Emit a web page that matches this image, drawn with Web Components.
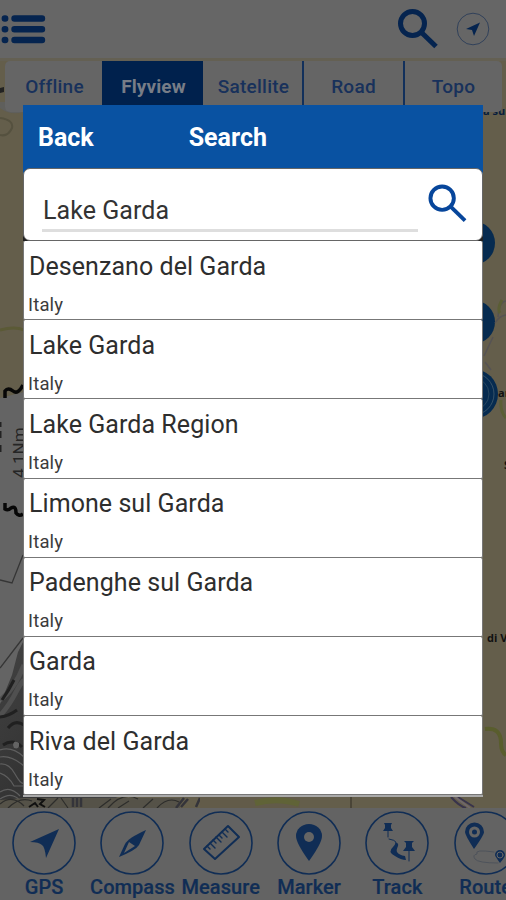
<!DOCTYPE html>
<html lang="en">
<head>
<meta charset="utf-8">
<title>Map search</title>
<style>
html,body{margin:0;width:506px;height:900px;overflow:hidden;background:#666}
</style>
</head>
<body>
<map-app></map-app>
<script>
const define = (name, html) => customElements.define(name, class extends HTMLElement {
  constructor(){
    super();
    const t = document.createElement('template');
    t.innerHTML = typeof html === 'function' ? html(this) : html;
    this.attachShadow({mode:'open'}).append(t.content.cloneNode(true));
  }
});

define('map-canvas', `
<style>:host{display:block;width:506px;height:900px}svg{display:block}text{font-family:"Open Sans",sans-serif;font-weight:700;fill:#111}</style>
<svg width="506" height="900" viewBox="0 0 506 900" fill="none">
  <defs><linearGradient id="hill" x1="0" y1="0" x2="1" y2="1"><stop stop-color="#424242"/><stop offset=".5" stop-color="#343434"/><stop offset="1" stop-color="#484848"/></linearGradient></defs>
  <rect width="506" height="900" fill="#645e4b"/>
  <path d="M0 330Q15 326 24 330" stroke="#5b5a36" stroke-width="3"/>
  <path d="M0 398L24 392V810H0Z" fill="#646464"/>
  <path d="M0 118Q14 120 12 128Q8 137 0 135" stroke="#55513f" stroke-width="2"/>
  <path d="M0 108Q10 116 24 112V102H0Z" fill="#5f5f5c"/>
  <path d="M0 88L4 87V92L0 93Z" fill="#222"/>
  <path d="M5 398V391Q8 387 13 391Q18 395 23 385" stroke="#070707" stroke-width="3.5"/>
  <path d="M5 503V509Q8 511 11 508Q16 505 16 513Q19 517 23 514" stroke="#070707" stroke-width="3.5"/>
  <path d="M0 422V427M0 431V438M0 445V452" stroke="#222" stroke-width="3"/>
  <path d="M0 580L12 583L23 555M0 668L23 638" stroke="#353535" stroke-width="1.3"/>
  <path d="M24 640L18 652L12 675L5 692L0 704V808H140L100 790H24Z" fill="url(#hill)"/>
  <path d="M0 700Q14 690 24 665M0 716Q10 704 15 694T24 680" stroke="#505050" stroke-width="5"/>
  <path d="M14 680Q9 690 2 700M17 710Q9 716 0 717M24 725Q15 719 8 728M3 745Q13 738 22 747" stroke="#202020" stroke-width="3"/>
  <path d="M13 745Q14 739 19 743Q20 750 14 748Z" fill="#646464"/>
  <path d="M0 750Q12 746 24 757M0 757Q11 755 24 766M0 764Q9 763 15 774T24 783M0 773Q9 776 14 786H24M0 792Q10 785 20 796M0 799Q13 790 22 803" stroke="#5e5e5e" stroke-width="1.2"/>
  <path d="M24 798H180V808H0V800Z" fill="#555248"/>
  <path d="M0 804Q12 794 24 806M8 808Q20 796 32 801M48 808L58 798M61 798L68 808M99 808L111 799M108 808Q123 791 138 799M118 808L129 801M143 808L153 799M157 808Q168 796 179 802" stroke="#2d2d2b" stroke-width="1.2"/>
  <path d="M29 807L35 803L38 807M37 799L44 800L40 804L45 807" stroke="#101010" stroke-width="2"/>
  <path d="M73 807V798M77 807V798M81 807V798M176 808L184 798M181 807L188 799M196 807L200 798" stroke="#34343a" stroke-width="2.5"/>
  <path d="M200 797H300V808H200Z" fill="#625b49"/><path d="M255 803Q278 797 299 804" stroke="#606337" stroke-width="6"/>
  <path d="M351 797V808" stroke="#302d24"/><path d="M451 797Q459 806 466 808M458 797L474 807" stroke="#38334b" stroke-width="2"/><path d="M455 797L470 808" stroke="#70676a" stroke-width="2"/>
  <circle cx="473" cy="243" r="22" fill="#062b50"/><circle cx="473" cy="322" r="22" fill="#062b50"/>
  <path d="M506 301Q499 302 498 317M506 315Q499 316 495 323M484 356L493 337M485 362L491 370" stroke="#565354" stroke-width="1.5"/>
  <circle cx="473" cy="394" r="25" fill="#062b50"/><circle cx="473" cy="394" r="21" stroke="#365268"/><circle cx="473" cy="394" r="16" stroke="#274761"/>
  <path d="M485 729Q501 727 501 743Q501 752 506 755" stroke="#595d2d" stroke-width="4"/>
  <path d="M502 300Q497 309 500 313M501 400Q500 412 506 418" stroke="#5b5e35" stroke-width="3"/>
  <text x="498" y="397" font-size="11">ar</text><text x="504" y="469" font-size="11">S</text><text x="487" y="642" font-size="11">di V</text>
  <text x="483" y="115" font-size="11" style="fill:#071d3d">a sul</text>
  <text transform="translate(25 481) rotate(-90)" font-size="17" style="font-weight:400;fill:#252525;font-family:Roboto,sans-serif" x="3">4.1Nm</text>
</svg>`);

define('circle-icon', h => `
<style>:host{display:block;flex:none}svg{display:block;overflow:visible}</style>
<svg width="64" height="64" viewBox="-32 -32 64 64" fill="none" stroke="#102d55" stroke-linecap="round" stroke-linejoin="round">
<circle r="31" stroke-width="1.6"/>${({
gps:'<path d="M15-14L2 15Q1 4-2 2Q-5-1-14-1Z" fill="#102d55" stroke="none"/>',
compass:'<path d="M14-13L7 2Q4 7-13 14L-7 1Q-4-5 14-13Z" fill="#102d55" stroke="none"/><path d="M-3-1L3 3L-8 10Z" fill="#656565" stroke="none"/>',
measure:'<path d="M7-17L18-6L-6 16L-17 6Z" stroke-width="2"/><path d="M-14 3L-11 6M-11 0L-6 5M-8-3L-5 0M-5-6L0-1M-2-8L1-5M1-11L6-6M4-14L7-11" stroke-width="1.4"/>',
marker:'<path d="M0 18Q-13 0-13-7A13 12 0 1 1 13-7Q13 0 0 18Z" fill="#102d55" stroke="none"/><circle cy="-6" r="5" fill="#656565" stroke="none"/>',
track:'<path d="M-13-20H-5L-6-18V-15L-4-12H-14L-12-15V-18ZM7-2H17L15 0V4L18 8H6L9 4V0Z" fill="#102d55" stroke="none"/><path d="M-9-12V-6M12 8V18" stroke-width="1"/><path d="M-8-4Q-2-3-1-1" stroke-width="1"/><path d="M-2-1Q-1 1-4 4Q-10 9-2 13Q4 17 9 17L8 13Q2 12 0 9Q-1 7 1 3Q2 0-2-1Z" fill="#102d55" stroke="none"/>',
route:'<path d="M-12 6Q-21-8-21-11A9.500 9.500 0 0 1-2-11Q-2-8-12 6Z" fill="#102d55" stroke="none"/><circle cx="-11.500" cy="-11" r="5.500" fill="#656565" stroke="none"/><circle cx="-11.500" cy="-11" r="2.500" fill="#102d55" stroke="none"/><path d="M14 20Q9 13 9 12A5 5 0 0 1 19 12Q19 14 14 20Z" fill="#102d55" stroke="none"/><circle cx="14" cy="12" r="3" stroke="#656565" stroke-width="1"/><path d="M8 9Q-12 6-9 11Q-14 12-11 16Q-8 20 12 20" stroke="#4e535b" stroke-width="1"/>'
})[h.getAttribute('name')]}</svg>`);

define('tool-item', h => `
<style>:host{display:flex;flex:0 0 88.3px;flex-direction:column;align-items:center;padding-top:3px;box-sizing:border-box;color:#102d55;font:500 20px/24px Roboto,sans-serif}
span{white-space:nowrap;-webkit-text-stroke:.2px currentColor;letter-spacing:.05px}</style>
<circle-icon name="${h.getAttribute('icon')}"></circle-icon><span><slot></slot></span>`);

define('tool-bar', `
<style>:host{display:flex;height:92px;background:#636363;overflow:hidden}</style>
<tool-item icon="gps">GPS</tool-item><tool-item icon="compass">Compass</tool-item><tool-item icon="measure">Measure</tool-item><tool-item icon="marker">Marker</tool-item><tool-item icon="track">Track</tool-item><tool-item icon="route">Route</tool-item>`);

define('search-icon', `
<style>:host{display:block;flex:none}svg{display:block;width:100%;height:100%}</style>
<svg viewBox="0 0 40 40" fill="none" stroke="currentColor" style="stroke-width:var(--ring)"><circle cx="14.500" cy="14.500" r="12"/><path d="M23 23L38 37.500"/></svg>`);

define('top-bar', `
<style>:host{display:flex;height:61px;background:#666;border-bottom:3px solid #646053;box-sizing:border-box;color:#05244f;align-items:center}
.menu{margin-right:auto}search-icon{width:40px;height:40px;margin-right:18px;--ring:5}.nav{margin-right:16px}</style>
<svg class="menu" width="46" height="32" viewBox="0 0 46 32" stroke="currentColor" stroke-width="6.400" stroke-linecap="round"><path d="M14.500 5.500H42M14.500 16.200H42M14.500 27H42"/><path d="M4.800 5.500h.4M4.800 16.200h.4M4.800 27h.4"/></svg>
<search-icon></search-icon>
<svg class="nav" width="34" height="34" viewBox="-17 -17 34 34"><circle r="15.800" fill="none" stroke="#31415a" stroke-width="1"/><path d="M7-6.500L1 7L-1 1L-7 0Z" fill="currentColor"/></svg>`);

define('map-tab', `
<style>:host{display:flex;justify-content:center;align-items:center;box-sizing:border-box;color:#18315b;border-left:2px solid #12305b;padding-top:1px;font:500 19px/24px Roboto,sans-serif;letter-spacing:.25px}
:host([first]){border-left-color:transparent}:host([plain]){border-left-color:transparent}:host([active]){background:#00214d;border-color:#00214d;color:#777d87;font-weight:700;letter-spacing:.1px}</style><slot></slot>`);

define('tab-strip', `
<style>:host{display:grid;grid-template-columns:97px 101px 99px 101px 99px;height:51px;margin:0 4px 0 5px;background:#656565;border-radius:5px;overflow:hidden;position:relative}</style>
<map-tab first>Offline</map-tab><map-tab active>Flyview</map-tab><map-tab plain>Satellite</map-tab><map-tab>Road</map-tab><map-tab>Topo</map-tab>`);

define('result-row', h => `
<style>:host{display:flex;flex-direction:column;box-sizing:border-box;height:79.2px;padding:10.5px 0 0 4px;background:#fff;border:1px solid #777;border-width:0 .5px 1.5px;border-radius:2px;font-family:Roboto,sans-serif;color:#2e2e2e}
.n{font-size:25px;line-height:30px;letter-spacing:.06px;padding-left:1px}.c{font-size:18.500px;line-height:22px;margin-top:12px;letter-spacing:.15px;color:#3b3b3b}</style>
<div class="n"><slot></slot></div><div class="c">${h.getAttribute('country')}</div>`);

define('search-field', `
<style>:host{display:flex;height:73px;box-sizing:border-box;padding:0 15px 0 18px;background:#fff;border:1px solid #666;border-radius:7px;color:#333;font:25px/30px Roboto,sans-serif}
.q{width:376px;height:63px;box-sizing:border-box;padding-top:27px;border-bottom:3px solid #dedede;letter-spacing:.06px;text-indent:1px}
search-icon{width:39px;height:39px;margin:15px 0 0 10px;color:#07469b;--ring:4}</style>
<div class="q"><slot></slot></div><search-icon></search-icon>`);

define('search-dialog', `
<style>:host{display:block;width:460px}
header{height:63px;display:flex;align-items:center;padding:2px 0 0 15px;box-sizing:border-box;background:#0952a2;color:#fff;font:700 25px/30px Roboto,sans-serif}
.t{margin-left:95px}.field{background:linear-gradient(#0952a2 50%,#222 50%)}.end{height:2px;background:#aaa}</style>
<header><span>Back</span><span class="t">Search</span></header>
<div class="field"><search-field>Lake Garda</search-field></div>
<result-row country="Italy">Desenzano del Garda</result-row>
<result-row country="Italy">Lake Garda</result-row>
<result-row country="Italy">Lake Garda Region</result-row>
<result-row country="Italy">Limone sul Garda</result-row>
<result-row country="Italy">Padenghe sul Garda</result-row>
<result-row country="Italy">Garda</result-row>
<result-row country="Italy">Riva del Garda</result-row>
<div class="end"></div>`);

define('map-app', `
<style>:host{display:flex;flex-direction:column;position:relative;width:506px;height:900px;overflow:hidden}
map-canvas{position:absolute;inset:0}top-bar,tool-bar{position:relative}tool-bar{margin-top:auto}
search-dialog{position:absolute;left:23px;top:105px}</style>
<map-canvas></map-canvas><top-bar></top-bar><tab-strip></tab-strip><tool-bar></tool-bar><search-dialog></search-dialog>`);
</script>
</body>
</html>
